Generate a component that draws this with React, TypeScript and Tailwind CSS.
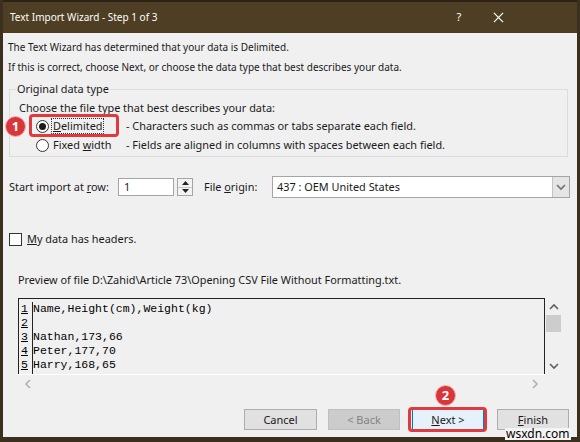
import React from 'react';

type Row = { n: number; text: string };

const previewRows: Row[] = [
  { n: 1, text: 'Name,Height(cm),Weight(kg)' },
  { n: 2, text: '' },
  { n: 3, text: 'Nathan,173,66' },
  { n: 4, text: 'Peter,177,70' },
  { n: 5, text: 'Harry,168,65' },
];

const Radio = ({ checked }: { checked?: boolean }) => (
  <span className="w-[13px] h-[13px] rounded-full border border-[#333] bg-white flex items-center justify-center shrink-0">
    {checked && <span className="w-[7px] h-[7px] rounded-full bg-[#1a1a1a]" />}
  </span>
);

const Chevron = ({ dir, color = '#606060' }: { dir: 'up' | 'down' | 'left' | 'right'; color?: string }) => {
  const d = {
    up: 'M1 6 L5 2 L9 6',
    down: 'M1 2 L5 6 L9 2',
    left: 'M6 1 L2 5 L6 9',
    right: 'M2 1 L6 5 L2 9',
  }[dir];
  const vertical = dir === 'up' || dir === 'down';
  return (
    <svg width={vertical ? 10 : 8} height={vertical ? 8 : 10} viewBox={vertical ? '0 0 10 8' : '0 0 8 10'}>
      <path d={d} fill="none" stroke={color} strokeWidth="1.6" />
    </svg>
  );
};

const Badge = ({ n, className }: { n: number; className: string }) => (
  <span
    className={`absolute w-[21px] h-[21px] rounded-full bg-[#d7373a] border border-[#f3b5b5] text-white text-[13px] font-bold flex items-center justify-center leading-none ${className}`}
  >
    {n}
  </span>
);

const Button = ({ children, disabled, focused, w }: { children: React.ReactNode; disabled?: boolean; focused?: boolean; w: string }) => (
  <div
    className={`${w} h-[21px] flex items-center justify-center border leading-[13px] ${
      focused
        ? 'border-[#0078d7] bg-[#e5f1fb] text-[#1a1a1a]'
        : disabled
          ? 'border-[#bfbfbf] bg-[#cccccc] text-[#838383]'
          : 'border-[#adadad] bg-[#e1e1e1] text-[#1a1a1a]'
    }`}
  >
    {children}
  </div>
);

export default function App() {
  return (
    <div className="w-[580px] h-[442px] bg-[#3b2f1d] px-[3px] pb-[5px] flex flex-col font-['Segoe_UI','Noto_Sans',sans-serif] text-[10.9px] text-[#1a1a1a] whitespace-nowrap overflow-hidden relative">
      {/* caption */}
      <div className="h-[33px] shrink-0 bg-[#4e3e23] border-t-2 border-[#2c2215] flex items-center pl-[7px] text-white">
        <span className="text-[10px]">Text Import Wizard - Step 1 of 3</span>
        <div className="ml-auto flex items-center mr-[60px]">
          <span className="w-[40px] text-center text-[11px]">?</span>
          <span className="w-[38px] flex justify-center">
            <svg width="11" height="11" viewBox="0 0 12 12">
              <path d="M1 1 L11 11 M11 1 L1 11" stroke="white" strokeWidth="1.3" />
            </svg>
          </span>
        </div>
      </div>

      <div className="flex-1 bg-[#f0f0f0] flex flex-col relative">
        <p className="mt-[4px] ml-[5px] h-[20px] leading-[20px] text-[10px]">The Text Wizard has determined that your data is Delimited.</p>
        <p className="ml-[5px] h-[20px] leading-[20px] text-[10px]">If this is correct, choose Next, or choose the data type that best describes your data.</p>

        <fieldset className="mt-[4px] ml-[6px] w-[559px] border border-[#dcdcdc] pb-[1px]">
          <legend className="ml-[6px] px-[1px] leading-[16px]">Original data type</legend>
          <div className="mt-[2px] pl-[9px] h-[17px] leading-[17px]">Choose the file type that best describes your data:</div>
          <div className="pl-[26px] h-[20px] flex items-center">
            <div className="w-[90px] flex items-center gap-[2px]">
              <Radio checked />
              <span className="border border-dotted border-[#333] px-[1px] leading-[14px]">
                <span className="underline">D</span>elimited
              </span>
            </div>
            <span>- Characters such as commas or tabs separate each field.</span>
          </div>
          <div className="pl-[26px] h-[19px] flex items-center">
            <div className="w-[90px] flex items-center gap-[3px]">
              <Radio />
              <span className="pl-[1px]">
                Fixed <span className="underline">w</span>idth
              </span>
            </div>
            <span>- Fields are aligned in columns with spaces between each field.</span>
          </div>
        </fieldset>

        <div className="mt-[19px] ml-[6px] h-[22px] flex items-center">
          <span className="w-[109px]">
            Start import at <span className="underline">r</span>ow:
          </span>
          <div className="w-[56px] h-[18px] border border-[#a5a5a5] bg-white pl-[5px] flex items-center">1</div>
          <div className="ml-[3px] w-[16px] h-[18px] border border-[#a5a5a5] bg-[#f3f3f3] flex flex-col">
            <div className="flex-1 flex items-center justify-center border-b border-[#c8c8c8]">
              <svg width="7" height="4" viewBox="0 0 7 4"><path d="M0 4 L3.5 0 L7 4 Z" fill="#222" /></svg>
            </div>
            <div className="flex-1 flex items-center justify-center">
              <svg width="7" height="4" viewBox="0 0 7 4"><path d="M0 0 L3.5 4 L7 0 Z" fill="#222" /></svg>
            </div>
          </div>
          <span className="ml-[11px] w-[68px]">
            File <span className="underline">o</span>rigin:
          </span>
          <div className="w-[298px] h-[22px] border border-[#a5a5a5] bg-white flex items-center">
            <span className="pl-[4px] flex-1">437 : OEM United States</span>
            <div className="w-[17px] h-full bg-[#e5e5e5] border-l border-[#c4c4c4] flex items-center justify-center">
              <Chevron dir="down" color="#707070" />
            </div>
          </div>
        </div>

        <div className="mt-[33px] ml-[6px] h-[16px] flex items-center">
          <span className="w-[13px] h-[13px] border border-[#333] bg-white" />
          <span className="ml-[5px]">
            <span className="underline">M</span>y data has headers.
          </span>
        </div>

        <p className="mt-[25px] ml-[15px] h-[16px] leading-[16px]">
          Preview of file D:\Zahid\Article 73\Opening CSV File Without Formatting.txt.
        </p>

        <div className="mt-[10px] ml-[15px] w-[544px] h-[94px] flex">
          <div className="w-[527px] flex flex-col">
            <div className="h-[76px] border-t border-x border-[#222] pt-[3px] overflow-hidden">
              {previewRows.map(r => (
                <div key={r.n} className="h-[14px] flex font-['Liberation_Mono',monospace] text-[11.5px] leading-[14px] text-black">
                  <span className="w-[14px] shrink-0 border-r border-[#222] pl-[2px] underline">{r.n}</span>
                  <span className="whitespace-pre">{r.text}</span>
                </div>
              ))}
              <div className="h-[14px] w-[14px] border-r border-[#222]" />
            </div>
            <div className="h-[18px] border-t border-white flex items-center justify-between px-[6px]">
              <Chevron dir="left" color="#b0b0b0" />
              <Chevron dir="right" color="#b0b0b0" />
            </div>
          </div>
          <div className="w-[17px] h-[76px] flex flex-col items-center">
            <div className="h-[17px] flex items-center justify-center">
              <Chevron dir="up" />
            </div>
            <div className="w-[15px] h-[17px] bg-[#cdcdcd]" />
            <div className="flex-1" />
            <div className="h-[17px] flex items-center justify-center">
              <Chevron dir="down" />
            </div>
          </div>
        </div>

        <div className="mt-[17px] ml-[241px] flex items-center text-[11px]">
          <Button w="w-[73px]">Cancel</Button>
          <div className="ml-[11px]">
            <Button w="w-[72px]" disabled>
              &lt; Back
            </Button>
          </div>
          <div className="ml-[12px] relative">
            <Button w="w-[72px]" focused>
              <span>
                <span className="underline">N</span>ext &gt;
              </span>
            </Button>
            <span className="absolute left-[-4px] right-[-3px] top-[-2px] bottom-[-2px] border-[3px] border-[#e0393e] rounded-[4px]" />
          </div>
          <div className="ml-[13px]">
            <Button w="w-[72px]">
              <span>
                <span className="underline">F</span>inish
              </span>
            </Button>
          </div>
        </div>

        {/* callouts */}
        <span className="absolute left-[26px] top-[81px] w-[90px] h-[23px] border-[3px] border-[#e0393e] rounded-[4px]" />
        <Badge n={1} className="left-[2px] top-[83px]" />
        <Badge n={2} className="left-[432px] top-[352px]" />
      </div>

      <span className="absolute left-[505px] top-[428px] px-[1px] bg-[#f4f4f4] text-[12px] leading-[12px] text-black font-['Noto_Sans',sans-serif]">
        wsxdn.com
      </span>
    </div>
  );
}
